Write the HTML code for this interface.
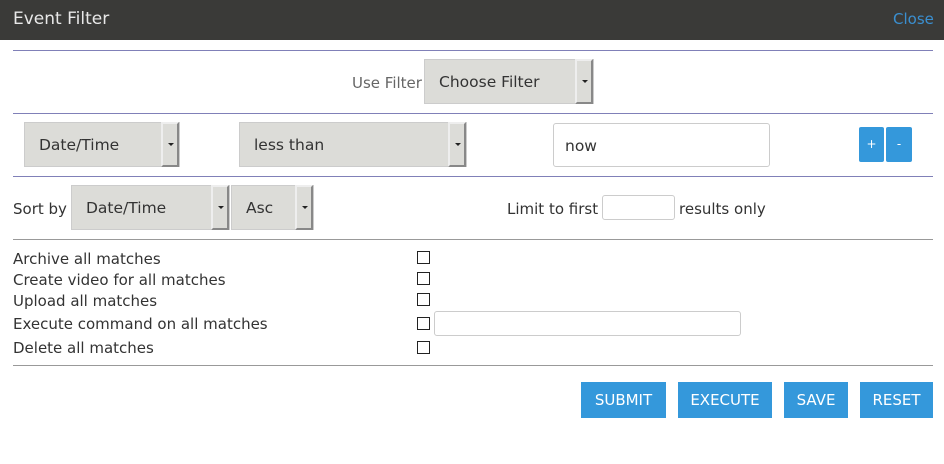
<!DOCTYPE html>
<html><head><style>
*{box-sizing:border-box;margin:0;padding:0}
body{width:944px;height:464px;background:#fff;font-family:"DejaVu Sans","Liberation Sans",sans-serif;color:#333;position:relative;overflow:hidden;font-size:15px}
.a{position:absolute}
.hdr{left:0;top:0;width:944px;height:40px;background:#3a3a38}
.hr{left:13px;width:920px;height:1px}
.sel{background:#dcdcd8;border:1px solid #ccc;font-size:15.5px;color:#333;line-height:45px;padding-left:14px}
.sel .ar{position:absolute;right:0;top:-1px;bottom:-1px;width:18px;border:2px solid #888;border-top-color:#eee;border-left-color:#eee;background:#dcdcd8}
.sel .ar:after{content:"";position:absolute;left:5px;top:19px;border:3px solid transparent;border-top:3px solid #222;border-bottom:0}
.inp{border:1px solid #ccc;border-radius:3px;background:#fff}
.btn{background:#3498db;color:#fff;text-align:center;font-size:15px;line-height:37px;height:36px}
.cb{width:13px;height:13px;border:1.5px solid #222;left:417px}
.lbl{left:13px;font-size:15px}
</style></head><body>
<div class="a hdr"></div>
<div class="a" style="left:13px;top:9px;font-size:17px;color:#e8e8e8">Event Filter</div>
<div class="a" style="left:893px;top:10px;font-size:15px;color:#3a8fd0">Close</div>
<div class="a hr" style="top:50px;background:#8080b8"></div>
<div class="a hr" style="top:113px;background:#8080b8"></div>
<div class="a hr" style="top:176px;background:#8080b8"></div>
<div class="a hr" style="top:239px;background:#999"></div>
<div class="a hr" style="top:365px;background:#999"></div>
<div class="a" style="left:352px;top:74px;color:#666">Use Filter</div>
<div class="a sel" style="left:424px;top:59px;width:170px;height:45px">Choose Filter<div class="ar"></div></div>
<div class="a sel" style="left:24px;top:122px;width:156px;height:45px">Date/Time<div class="ar"></div></div>
<div class="a sel" style="left:239px;top:122px;width:228px;height:45px">less than<div class="ar"></div></div>
<div class="a inp" style="left:553px;top:123px;width:217px;height:44px;padding-left:11px;line-height:44px;font-size:15.5px">now</div>
<div class="a btn" style="left:859px;top:127px;width:25px;height:35px;line-height:34px;font-size:12px;border-radius:2px">+</div>
<div class="a btn" style="left:886px;top:127px;width:26px;height:35px;line-height:34px;font-size:12px;border-radius:2px">-</div>
<div class="a" style="left:13px;top:200px">Sort by</div>
<div class="a sel" style="left:71px;top:185px;width:159px;height:45px">Date/Time<div class="ar"></div></div>
<div class="a sel" style="left:231px;top:185px;width:83px;height:45px">Asc<div class="ar"></div></div>
<div class="a" style="left:507px;top:200px">Limit to first</div>
<div class="a inp" style="left:602px;top:195px;width:73px;height:25px"></div>
<div class="a" style="left:679px;top:200px">results only</div>
<div class="a lbl" style="top:250px">Archive all matches</div>
<div class="a lbl" style="top:271px">Create video for all matches</div>
<div class="a lbl" style="top:292px">Upload all matches</div>
<div class="a lbl" style="top:315px">Execute command on all matches</div>
<div class="a lbl" style="top:339px">Delete all matches</div>
<div class="a cb" style="top:251px"></div>
<div class="a cb" style="top:272px"></div>
<div class="a cb" style="top:293px"></div>
<div class="a cb" style="top:317px"></div>
<div class="a cb" style="top:341px"></div>
<div class="a inp" style="left:434px;top:311px;width:307px;height:25px"></div>
<div class="a btn" style="left:581px;top:382px;width:85px">SUBMIT</div>
<div class="a btn" style="left:678px;top:382px;width:94px">EXECUTE</div>
<div class="a btn" style="left:784px;top:382px;width:64px">SAVE</div>
<div class="a btn" style="left:860px;top:382px;width:73px">RESET</div>
</body></html>
